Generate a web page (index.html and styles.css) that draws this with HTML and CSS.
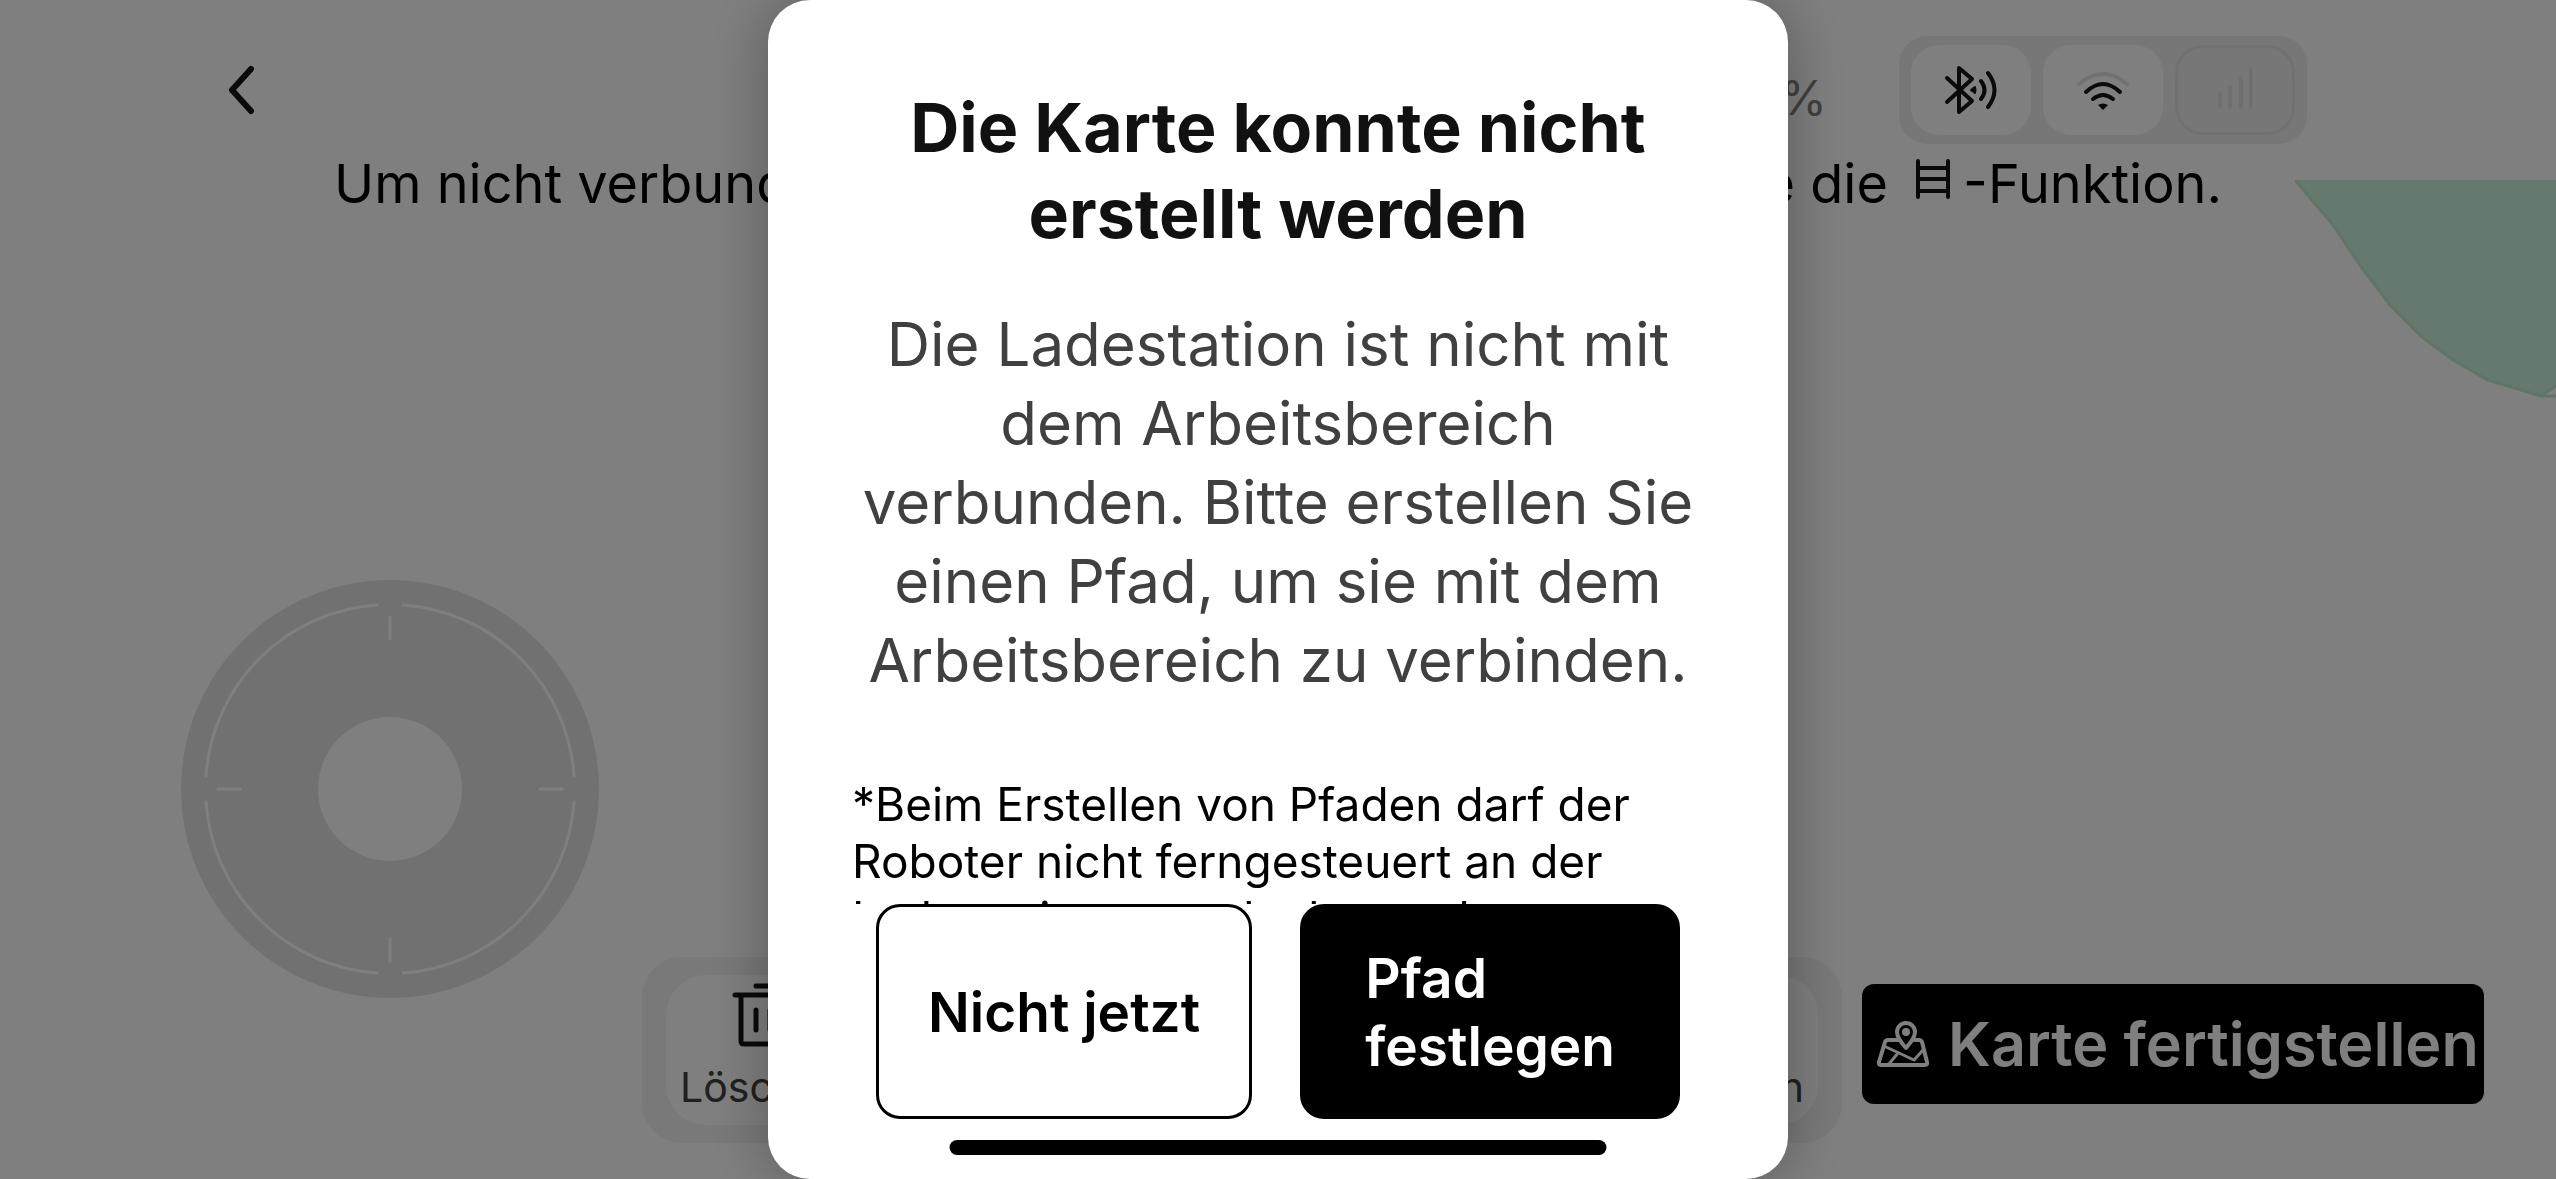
FILE: index.html
```html
<!DOCTYPE html>
<html lang="de">
<head>
    <meta charset="UTF-8">
    <meta name="viewport" content="width=device-width, initial-scale=1.0">
    <title>Karte erstellen</title>
    <link rel="stylesheet" href="styles.css">
</head>
<body>

<div class="screen">
    <svg class="map-area" viewBox="0 0 261 220" width="261" height="220" aria-hidden="true">
        <path d="M0 0 H261 V206 L246 216 L193 200 L158 180 L127 157 L95 125 L67 88 L38 45 Z" fill="#caf2dc"/>
        <path d="M0 0 L38 45 L67 88 L95 125 L127 157 L158 180 L193 200 L246 216 H261 M246 216 L261 206" fill="none" stroke="#c2eacf" stroke-width="3"/>
    </svg>

    <header class="topbar">
        <button class="back" aria-label="Zurück">
            <svg viewBox="0 0 28 50" width="28" height="50"><path d="M23 4 L4 25 L23 46" fill="none" stroke="#141414" stroke-width="6" stroke-linecap="round" stroke-linejoin="round"/></svg>
        </button>
        <span class="battery">100 %</span>
        <div class="status">
            <div class="status-tile">
                <svg viewBox="0 0 54 50" width="54" height="50" fill="none" stroke="#141414" stroke-width="4" stroke-linecap="round" stroke-linejoin="round">
                    <path d="M3 13 L28 36 L15 47 V3 L28 14 L3 37"/>
                    <path d="M37 16 Q44 25 37 34 M44 8 Q57 25 44 42"/>
                    <path d="M27 25 L31 22 Q32 25 31 28 Z" fill="#141414" stroke-width="2"/>
                </svg>
            </div>
            <div class="status-tile">
                <svg viewBox="0 0 54 50" width="54" height="50" fill="none" stroke="#141414" stroke-width="4" stroke-linecap="round">
                    <path d="M3 19 Q27 -1 51 19" stroke="#e3e3e3"/>
                    <path d="M10 27 Q27 11 44 27"/>
                    <path d="M17 34 Q27 26 37 34"/>
                    <path d="M22 40 Q27 37 32 40 L27 45 Z" fill="#141414" stroke="none"/>
                </svg>
            </div>
            <div class="status-tile off">
                <svg viewBox="0 0 54 50" width="54" height="50" fill="none" stroke="#dedede" stroke-width="4" stroke-linecap="round">
                    <path d="M12 28 V42 M22 22 V42 M33 13 V42 M43 4 V42"/>
                </svg>
            </div>
        </div>
    </header>

    <p class="hint">
        <span>Um nicht verbundene Bereiche zu verbinden,</span>
        <span>nutzen Sie die
            <svg class="ladder" viewBox="0 0 36 42" width="36" height="42" fill="none" stroke="#141414" stroke-width="4" stroke-linecap="round"><path d="M3 3 V39 M33 3 V39 M3 10 H33 M3 21 H33 M3 33 H33"/></svg>-Funktion.</span>
    </p>

    <footer class="controls">
        <svg class="joystick" viewBox="-209 -209 418 418" width="418" height="418" role="img" aria-label="Joystick">
            <circle r="209" fill="#e3e3e3"/>
            <g fill="none" stroke="#ffffff" stroke-width="3" stroke-linecap="round">
                <path d="M13 -184 A184 184 0 0 1 184 -13"/>
                <path d="M184 13 A184 184 0 0 1 13 184"/>
                <path d="M-13 184 A184 184 0 0 1 -184 13"/>
                <path d="M-184 -13 A184 184 0 0 1 -13 -184"/>
                <path d="M0 -172 V-150 M0 172 V150 M-172 0 H-150 M172 0 H150"/>
            </g>
            <circle r="72" fill="#ffffff"/>
        </svg>
        <div class="toolbar">
            <div class="tools">
                <button class="tool">
                    <svg viewBox="0 0 62 66" width="62" height="66" fill="none" stroke="#141414" stroke-width="5" stroke-linecap="round" stroke-linejoin="round"><path d="M24 3 H38 M3 12 H59 M9 12 V58 Q9 61 12 61 H50 Q53 61 53 58 V12 M24 27 V47 M38 27 V47"/></svg>
                    Löschen
                </button>
                <button class="tool">
                    <svg viewBox="0 0 62 66" width="62" height="66" fill="none" stroke="#141414" stroke-width="5" stroke-linecap="round"><path d="M31 10 V56 M8 33 H54"/></svg>
                    Hinzufügen
                </button>
            </div>
        </div>
        <button class="finish">
            <svg viewBox="0 0 54 48" width="54" height="48" fill="none" stroke="#ffffff" stroke-width="4" stroke-linecap="round" stroke-linejoin="round">
                <path d="M22 20 H12 Q10 20 9 22 L3 42 Q2 45 5 45 H48 Q52 45 51 42 L46 22 Q45 20 43 20 H38"/>
                <path d="M30 28 Q21 18 21 12 A9 9 0 0 1 39 12 Q39 18 30 28 Z"/>
                <circle cx="30" cy="12" r="2"/>
                <path d="M10 27 L38 40 M22 33 L13 44 M38 40 L48 29" stroke-width="3"/>
            </svg>
            Karte fertigstellen
        </button>
    </footer>
</div>

<div class="overlay">
    <div class="dialog" role="dialog" aria-modal="true" aria-labelledby="dialogTitle">
        <div class="dialog-content">
            <h1 id="dialogTitle">Die Karte konnte nicht erstellt werden</h1>
            <p class="message">Die Ladestation ist nicht mit dem Arbeitsbereich verbunden. Bitte erstellen Sie einen Pfad, um sie mit dem Arbeitsbereich zu verbinden.</p>
            <p class="note">*Beim Erstellen von Pfaden darf der Roboter nicht ferngesteuert an der Ladestation angedockt werden.</p>
        </div>
        <div class="dialog-buttons">
            <button class="secondary">Nicht jetzt</button>
            <button class="primary">Pfad festlegen</button>
        </div>
    </div>
    <div class="home-bar"></div>
</div>

</body>
</html>
```
FILE: styles.css
```css
* {
    box-sizing: border-box;
}
body {
    margin: 0;
    font-family: Inter, "Liberation Sans", sans-serif;
    color: #000;
    background: #fff;
}
button {
    font-family: inherit;
    border: none;
    padding: 0;
    background: none;
    color: inherit;
    cursor: pointer;
}
svg {
    display: block;
    flex: none;
}
.screen {
    position: relative;
    display: flex;
    flex-direction: column;
    height: 100vh;
    overflow: hidden;
}
.map-area {
    position: absolute;
    top: 180px;
    right: 0;
}
.topbar {
    display: flex;
    align-items: center;
    padding: 36px 249px 0 228px;
}
.back {
    margin-right: auto;
}
.battery {
    margin: 14px 72px 0 0;
    font-size: 48px;
    color: #808080;
}
.status {
    display: flex;
    gap: 12px;
    padding: 9px 12px;
    border-radius: 28px;
    background: #eee;
}
.status-tile {
    display: flex;
    align-items: center;
    justify-content: center;
    width: 120px;
    height: 90px;
    border-radius: 28px;
    background: #fff;
}
.status-tile.off {
    border: 3px solid #e3e3e3;
    background: none;
}
.hint {
    display: flex;
    justify-content: space-between;
    margin: 4px 0 0;
    padding: 0 334px;
    font-size: 54px;
    line-height: 72px;
    white-space: nowrap;
}
.ladder {
    display: inline-block;
    margin: 0 12px;
    vertical-align: 3px;
}
.controls {
    display: flex;
    align-items: flex-end;
    margin-top: auto;
    padding: 0 72px 36px 181px;
}
.joystick {
    margin: 0 43px 145px 0;
}
.toolbar {
    flex: 1;
    padding: 18px 24px;
    border-radius: 40px;
    background: #f2f2f2;
}
.tools {
    display: flex;
    justify-content: space-between;
    height: 150px;
    padding: 0 14px;
    border-radius: 40px;
    background: #fff;
}
.tool {
    display: flex;
    flex-direction: column;
    align-items: center;
    gap: 14px;
    padding-top: 8px;
    font-size: 41px;
    line-height: 48px;
    color: #404040;
}
.finish {
    display: flex;
    align-items: center;
    gap: 18px;
    width: 622px;
    height: 120px;
    margin: 0 0 39px 20px;
    padding-left: 14px;
    border-radius: 12px;
    background: #000;
    color: #fff;
    font-size: 61px;
    font-weight: 600;
    white-space: nowrap;
}
.overlay {
    position: fixed;
    inset: 0;
    display: flex;
    justify-content: center;
    background: rgba(0, 0, 0, 0.5);
}
.dialog {
    display: flex;
    flex-direction: column;
    width: 1020px;
    padding: 84px 84px 60px;
    border-radius: 42px;
    background: #fff;
    box-shadow: 0 0 60px rgba(0, 0, 0, 0.3);
}
.dialog-content {
    flex: 1;
    min-height: 0;
    overflow: hidden;
}
.dialog h1 {
    margin: 0;
    font-size: 68px;
    line-height: 86px;
    text-align: center;
    color: #111;
}
.message {
    margin: 49px 0 0;
    font-size: 60px;
    line-height: 79px;
    text-align: center;
    color: #404040;
}
.note {
    margin: 76px 0 0;
    font-size: 46px;
    line-height: 57px;
}
.dialog-buttons {
    display: grid;
    grid-template-columns: 1fr 1fr;
    gap: 48px;
    padding: 0 24px;
}
.dialog-buttons button {
    height: 215px;
    border: 3px solid #000;
    border-radius: 24px;
    font-size: 55px;
    line-height: 68px;
    font-weight: 600;
}
.dialog-buttons .primary {
    padding: 0 62px;
    background: #000;
    color: #fff;
    text-align: left;
}
.home-bar {
    position: absolute;
    bottom: 24px;
    left: 50%;
    width: 657px;
    height: 15px;
    border-radius: 8px;
    background: #000;
    transform: translateX(-50%);
}
```
